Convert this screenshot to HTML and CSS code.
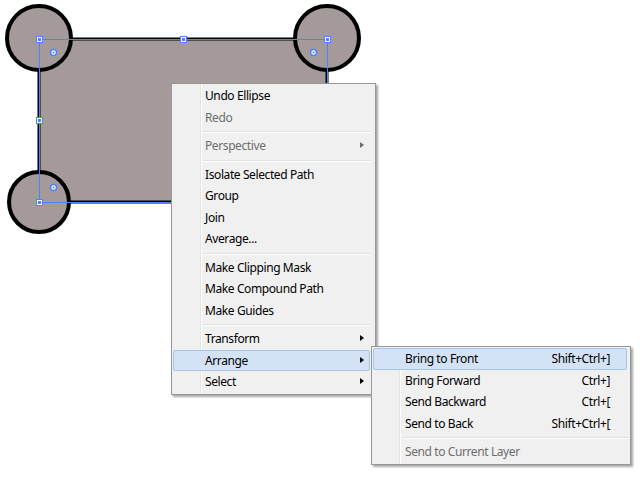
FILE: index.html
```html
<!DOCTYPE html>
<html lang="en">
<head>
    <meta charset="UTF-8">
    <title>Arrange menu</title>
    <link rel="stylesheet" href="styles.css">
</head>
<body>

<div class="canvas">
    <!-- Artwork: rounded rectangle with three circles, selected -->
    <svg class="artwork" width="640" height="480" viewBox="0 0 640 480">
        <rect x="39" y="39" width="288" height="163" rx="6" fill="#a39a99" stroke="#000" stroke-width="3"/>
        <circle cx="39" cy="38" r="32" fill="#a39a99" stroke="#000" stroke-width="4"/>
        <circle cx="327" cy="38" r="32" fill="#a39a99" stroke="#000" stroke-width="4"/>
        <circle cx="39" cy="202" r="30" fill="#a39a99" stroke="#000" stroke-width="4"/>

        <g class="selection" fill="none" stroke="#4f80ff" stroke-width="1">
            <path d="M39.5 39.5 H327.5 V120 M39.5 39.5 V202.5 H300"/>
        </g>

        <g class="anchors">
            <rect x="36.5" y="36.5" width="6" height="6"/>
            <rect x="180.5" y="36.5" width="6" height="6"/>
            <rect x="324.5" y="36.5" width="6" height="6"/>
            <rect x="36.5" y="117.5" width="6" height="6"/>
            <rect x="36.5" y="199.5" width="6" height="6"/>
        </g>
        <g class="anchor-dots">
            <rect x="38" y="38" width="3" height="3"/>
            <rect x="182" y="38" width="3" height="3"/>
            <rect x="326" y="38" width="3" height="3"/>
            <rect x="38" y="119" width="3" height="3"/>
            <rect x="38" y="201" width="3" height="3"/>
        </g>

        <g class="centers">
            <circle cx="53.5" cy="52.5" r="3"/>
            <circle cx="313.5" cy="52.5" r="3"/>
            <circle cx="53.5" cy="187.5" r="3"/>
        </g>
        <g class="center-dots">
            <circle cx="53.5" cy="52.5" r="1"/>
            <circle cx="313.5" cy="52.5" r="1"/>
            <circle cx="53.5" cy="187.5" r="1"/>
        </g>
    </svg>

    <!-- Context menu -->
    <div class="menu main-menu">
        <div class="item">Undo Ellipse</div>
        <div class="item disabled">Redo</div>
        <div class="sep"></div>
        <div class="item disabled has-sub">Perspective</div>
        <div class="sep"></div>
        <div class="item">Isolate Selected Path</div>
        <div class="item">Group</div>
        <div class="item">Join</div>
        <div class="item">Average...</div>
        <div class="sep"></div>
        <div class="item">Make Clipping Mask</div>
        <div class="item">Make Compound Path</div>
        <div class="item">Make Guides</div>
        <div class="sep"></div>
        <div class="item has-sub">Transform</div>
        <div class="item has-sub active">Arrange</div>
        <div class="item has-sub">Select</div>
    </div>

    <!-- Arrange submenu -->
    <div class="menu sub-menu">
        <div class="item active"><span class="label">Bring to Front</span><span class="key">Shift+Ctrl+]</span></div>
        <div class="item"><span class="label">Bring Forward</span><span class="key">Ctrl+]</span></div>
        <div class="item"><span class="label">Send Backward</span><span class="key">Ctrl+[</span></div>
        <div class="item"><span class="label">Send to Back</span><span class="key">Shift+Ctrl+[</span></div>
        <div class="sep"></div>
        <div class="item disabled"><span class="label">Send to Current Layer</span></div>
    </div>
</div>

</body>
</html>
```

FILE: styles.css
```css
/* Page */
body {
    margin: 0;
    background: #fff;
    font-family: "Noto Sans", "Open Sans", sans-serif;
    font-size: 12px;
    letter-spacing: -0.4px;
    color: #000;
}

.canvas {
    position: relative;
    width: 640px;
    height: 480px;
    overflow: hidden;
}

.artwork {
    position: absolute;
    top: 0;
    left: 0;
}

/* Selection handles */
.anchors rect {
    fill: #fff;
    stroke: #4f80ff;
    stroke-width: 1;
}

.anchor-dots rect {
    fill: #4f80ff;
}

.centers circle {
    fill: #fff;
    stroke: #4f80ff;
    stroke-width: 1.5;
}

.center-dots circle {
    fill: #4f80ff;
}

/* Menus */
.menu {
    position: absolute;
    box-sizing: border-box;
    border: 1px solid #979797;
    box-shadow: 2px 2px 2px rgba(0, 0, 0, 0.35);
}

.main-menu {
    left: 171px;
    top: 83px;
    width: 205px;
    padding: 1px 5px 1px 1px;
    background: linear-gradient(to right, #f0f0f0 28px, #e2e3e3 28px, #e2e3e3 29px, #fff 29px, #fff 30px, #f0f0f0 30px);
}

.sub-menu {
    left: 371px;
    top: 346px;
    width: 260px;
    padding: 1px 3px 1px 1px;
    background: linear-gradient(to right, #f0f0f0 27px, #e2e3e3 27px, #e2e3e3 28px, #fff 28px, #fff 29px, #f0f0f0 29px);
}

.item {
    position: relative;
    display: flex;
    align-items: center;
    height: 21.5px;
    box-sizing: border-box;
    border: 1px solid transparent;
    border-radius: 2px;
    padding-left: 31px;
    padding-right: 16px;
    white-space: nowrap;
}

.sub-menu .item {
    padding-right: 16px;
}

.item.disabled {
    color: #6d6d6d;
}

.item.active {
    background: #d3e3f5;
    border-color: #a4c5ec;
}

.label {
    flex: 1;
}

.key {
    text-align: right;
}

/* Submenu arrow */
.has-sub::after {
    content: "";
    position: absolute;
    right: 5px;
    top: 6px;
    border-style: solid;
    border-width: 3.5px 0 3.5px 4px;
    border-color: transparent transparent transparent #000;
}

.has-sub.disabled::after {
    border-left-color: #6d6d6d;
}

.sep {
    height: 7px;
    margin-left: 29px;
    background: linear-gradient(to bottom, transparent 3px, #e0e0e0 3px, #e0e0e0 4px, #fff 4px, #fff 5px, transparent 5px);
}
```
